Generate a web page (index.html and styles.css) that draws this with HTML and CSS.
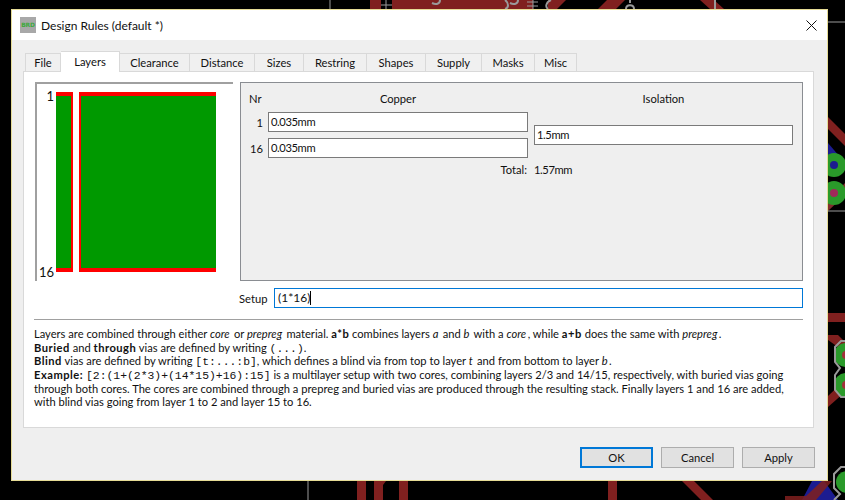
FILE: index.html
```html
<!DOCTYPE html>
<html>
<head>
	<meta http-equiv="content-type" content="text/html; charset=utf-8" />
	<title>Design Rules</title>
	<link rel="stylesheet" href="styles.css">
</head>
<body>
	<!-- board editor behind the dialog -->
	<svg class="board" width="845" height="500" viewBox="0 0 845 500">
		<g fill="#80201f">
			<rect x="370" y="0" width="11" height="9" />
			<rect x="392" y="0" width="141" height="9" />
			<polygon points="548,0 566,0 557,9 548,9" />
			<polygon points="607,0 625,0 616,9 598,9" />
			<polygon points="700,0 714,0 724,9 710,9" />
			<polygon points="828,117 845,134 845,146 828,129" />
			<rect x="828" y="313" width="17" height="9" />
			<polygon points="828,335 838,335 845,342 845,352 828,340" />
			<polygon points="828,396 845,380 845,392 828,407" />
			<rect x="357" y="481" width="9" height="19" />
			<polygon points="374,481 386,481 383,485 383,500 374,500" />
			<rect x="399" y="481" width="9" height="19" />
			<rect x="608" y="481" width="9" height="19" />
			<polygon points="682,481 694,481 713,500 701,500" />
		</g>
		<polygon fill="#1c1c90" points="828,143 840,157 828,168" />
		<polygon fill="#1c1c90" points="812,481 824,481 838,500 802,500" />
		<polygon fill="#80201f" opacity="0.85" points="785,500 785,496 806,496 822,481 832,481 816,500" />
		<polygon fill="#a03a3a" opacity="0.8" points="828,211 828,201 845,183 845,195" />
		<g fill="#2a9a2a">
			<circle cx="834" cy="165" r="12" />
			<circle cx="834" cy="193" r="12" />
			<circle cx="846" cy="355" r="12" />
			<circle cx="846" cy="385" r="12" />
			<circle cx="847" cy="482" r="11" />
		</g>
		<circle fill="#1c1c90" cx="834" cy="165" r="4" />
		<circle fill="#a02a5a" cx="834" cy="193" r="4" />
		<circle fill="#a0303a" cx="846" cy="355" r="4" />
		<circle fill="#a0303a" cx="846" cy="385" r="4" />
		<g fill="none" stroke="#9a9a9a" stroke-width="2">
			<path d="M845 341 H841 L835 347 V362 L840 368 L835 375 V390 L841 397 H845" />
			<path d="M845 467 H841 L834 474 V488 L840 494 L834 500" />
			<path d="M828 22 H845 M828 211 H845 M330 0 V9 M308 481 V500" stroke-width="1" />
			<path d="M381 5 H392 M386 0 V9 M527 2 H538 M527 6 H538 M533 0 V9" stroke-width="1" />
			<path d="M440 0 C440 4 436 5 432 3 M510 3 C514 5 518 4 518 0 M505 0 C509 3 509 8 505 9 M551 0 C546 2 545 7 548 9" />
			<path d="M626 9 C626 4 634 4 634 9 M630 0 V3 M715 0 V9" />
		</g>
	</svg>

	<div class="window">
		<div class="titlebar">
			<span class="app-icon">BRD</span>
			<span class="title">Design Rules (default *)</span>
			<svg class="close" width="11" height="11" viewBox="0 0 11 11">
				<path d="M0.5 0.5 L10.5 10.5 M10.5 0.5 L0.5 10.5" stroke="#111" fill="none" />
			</svg>
		</div>

		<div class="content">
			<div class="tabs">
				<span class="tab tab-file">File</span>
				<span class="tab tab-active">Layers</span>
				<span class="tab tab-clearance">Clearance</span>
				<span class="tab tab-distance">Distance</span>
				<span class="tab tab-sizes">Sizes</span>
				<span class="tab tab-restring">Restring</span>
				<span class="tab tab-shapes">Shapes</span>
				<span class="tab tab-supply">Supply</span>
				<span class="tab tab-masks">Masks</span>
				<span class="tab tab-misc">Misc</span>
			</div>

			<div class="pane">
				<div class="top-row">
					<div class="preview">
						<div class="preview-labels">
							<span>1</span>
							<span>16</span>
						</div>
						<div class="layer layer-small"></div>
						<div class="layer layer-big"></div>
					</div>

					<div class="group">
						<div class="group-head">
							<span class="col-nr">Nr</span>
							<span class="col-copper">Copper</span>
							<span class="col-iso">Isolation</span>
						</div>
						<div class="group-body">
							<div class="copper-rows">
								<div class="row">
									<span class="nr">1</span>
									<span class="field num">0.035mm</span>
								</div>
								<div class="row">
									<span class="nr">16</span>
									<span class="field num">0.035mm</span>
								</div>
							</div>
							<span class="field field-iso num">1.5mm</span>
						</div>
						<div class="total">
							<span class="total-label">Total:</span>
							<span class="num">1.57mm</span>
						</div>
					</div>
				</div>

				<div class="setup">
					<span class="setup-label">Setup</span>
					<span class="field field-setup">(1*16)<i class="caret"></i></span>
				</div>

				<div class="help">
					<p>Layers are combined through either <em>core</em> or <em>prepreg</em> material. <b>a*b</b> combines layers <em>a</em> and <em>b</em> with a <em>core</em>, while <b>a+b</b> does the same with <em>prepreg</em>.</p>
					<p><b>Buried</b> and <b>through</b> vias are defined by writing <code>(...)</code>.</p>
					<p><b>Blind</b> vias are defined by writing <code>[t:...:b]</code>, which defines a blind via from top to layer <em>t</em> and from bottom to layer <em>b</em>.</p>
					<p><b>Example:</b> <code>[2:(1+(2*3)+(14*15)+16):15]</code> is a multilayer setup with two cores, combining layers 2/3 and 14/15, respectively, with buried vias going</p>
					<p>through both cores. The cores are combined through a prepreg and buried vias are produced through the resulting stack. Finally layers 1 and 16 are added,</p>
					<p>with blind vias going from layer 1 to 2 and layer 15 to 16.</p>
				</div>
			</div>

			<div class="buttons">
				<button class="btn btn-default" type="button">OK</button>
				<button class="btn" type="button">Cancel</button>
				<button class="btn" type="button">Apply</button>
			</div>
		</div>
	</div>
</body>
</html>
```

FILE: styles.css
```css
body {
	margin: 0;
	width: 845px;
	height: 500px;
	overflow: hidden;
	position: relative;
	background-color: #000;
	font-family: Lato, Arial, sans-serif;
	font-size: 11.2px;
	color: #111;
}

.board {
	position: absolute;
	left: 0;
	top: 0;
}

/* The dialog sits over the board */
.window {
	position: absolute;
	left: 11px;
	top: 9px;
	width: 815px;
	height: 470px;
	border: 1px solid #e6dc96;
	background-color: #efefef;
}

.titlebar {
	height: 30px;
	background-color: #fff;
	display: flex;
	align-items: center;
	padding: 0 10px 0 8px;
}

.app-icon {
	width: 16px;
	height: 16px;
	line-height: 16px;
	background-color: #a8a8a8;
	color: #3da83d;
	font-family: "DejaVu Sans", sans-serif;
	font-size: 6px;
	font-weight: bold;
	text-align: center;
	letter-spacing: -0.2px;
}

.title {
	margin-left: 5px;
	flex: 1;
	font-size: 12px;
}

.content {
	padding: 11px 12px 0 11px;
}

/* Tab strip */
.tabs {
	display: flex;
	height: 20px;
	padding-left: 2px;
	align-items: flex-end;
}

.tab {
	height: 18px;
	line-height: 18px;
	box-sizing: border-box;
	border: 1px solid #d9d9d9;
	border-left-width: 0;
	border-bottom-width: 0;
	text-align: center;
	background-color: #f0f0f0;
}

.tab-file { width: 36px; border-left-width: 1px; }
.tab-clearance { width: 70px; }
.tab-distance { width: 65px; }
.tab-sizes { width: 49px; }
.tab-restring { width: 63px; }
.tab-shapes { width: 59px; }
.tab-supply { width: 56px; }
.tab-masks { width: 53px; }
.tab-misc { width: 42px; }

.tab-active {
	width: 59px;
	height: 21px;
	line-height: 19px;
	margin-bottom: -1px;
	border-left-width: 0;
	background-color: #fff;
	position: relative;
}

.pane {
	width: 791px;
	height: 357px;
	box-sizing: border-box;
	border: 1px solid #d9d9d9;
	background-color: #fff;
	padding: 10px 10px 0 11px;
}

.top-row {
	display: flex;
	height: 200px;
}

/* Layer stack preview */
.preview {
	width: 198px;
	height: 199px;
	box-sizing: border-box;
	border-left: 2px solid #a0a0a0;
	border-top: 2px solid #a0a0a0;
	display: flex;
	align-items: flex-start;
	padding-top: 8px;
}

.preview-labels {
	width: 17px;
	height: 184px;
	display: flex;
	flex-direction: column;
	justify-content: space-between;
	align-items: flex-end;
	font-size: 13px;
	line-height: 8px;
}

.layer {
	height: 180px;
	box-sizing: border-box;
	background-color: #009900;
	border-top: 4px solid #f00;
	border-bottom: 4px solid #f00;
}

.layer-small {
	width: 17px;
	margin-left: 2px;
	border-right: 2px solid #f00;
}

.layer-big {
	width: 137px;
	margin-left: 6px;
	border-left: 2px solid #f00;
}

/* Right hand group box */
.group {
	width: 563px;
	height: 199px;
	margin-left: 7px;
	box-sizing: border-box;
	border: 1px solid #8a8d92;
	background-color: #efefef;
	padding: 0 9px 0 8px;
}

.group-head {
	display: flex;
	height: 29px;
	line-height: 31px;
}

.col-nr { width: 19px; }
.col-copper { width: 260px; text-align: center; }
.col-iso { width: 259px; margin-left: 6px; text-align: center; }

.group-body {
	display: flex;
	align-items: center;
}

.copper-rows {
	display: flex;
	flex-direction: column;
	gap: 6px;
}

.row {
	display: flex;
	align-items: center;
}

.nr {
	width: 14px;
	text-align: right;
	margin-right: 5px;
}

.field {
	display: block;
	box-sizing: border-box;
	border: 1px solid #7a7a7a;
	background-color: #fff;
	height: 20px;
	line-height: 18px;
	padding-left: 2px;
}

/* digits run narrower in the original font */
.num {
	letter-spacing: -0.4px;
}

.row .field {
	width: 260px;
}

.field-iso {
	width: 259px;
	margin-left: 6px;
}

.total {
	display: flex;
	margin-top: 3px;
	line-height: 17px;
}

.total-label {
	width: 278px;
	text-align: right;
	margin-right: 7px;
}

.setup {
	display: flex;
	align-items: center;
	margin-top: 6px;
}

.setup-label {
	width: 35px;
	margin-left: 204px;
}

.field-setup {
	width: 529px;
	padding-left: 3px;
	border-color: #0078d7;
	font-size: 12px;
}

.caret {
	display: inline-block;
	width: 1px;
	height: 14px;
	background-color: #000;
	vertical-align: -3px;
}

/* Help text under the rule */
.help {
	margin: 11px 0 0 -1px;
	width: 769px;
	border-top: 1px solid #a0a0a0;
	padding-top: 7px;
	white-space: nowrap;
	font-size: 11.15px;
}

.help p {
	margin: 0;
	height: 13.7px;
	line-height: 13.7px;
}

.help em {
	margin-right: 1.5px;
}

.help b {
	letter-spacing: 0.5px;
}

.help code {
	font-family: "Liberation Mono", monospace;
	font-size: 11.4px;
	line-height: 1;
}

/* Dialog buttons */
.buttons {
	display: flex;
	justify-content: flex-end;
	gap: 8px;
	margin-top: 19px;
}

.btn {
	width: 73px;
	height: 21px;
	box-sizing: border-box;
	padding: 0;
	border: 1px solid #adadad;
	background-color: #e1e1e1;
	font-family: inherit;
	font-size: 11.2px;
	color: #111;
}

.btn-default {
	border: 2px solid #0078d7;
}
```
